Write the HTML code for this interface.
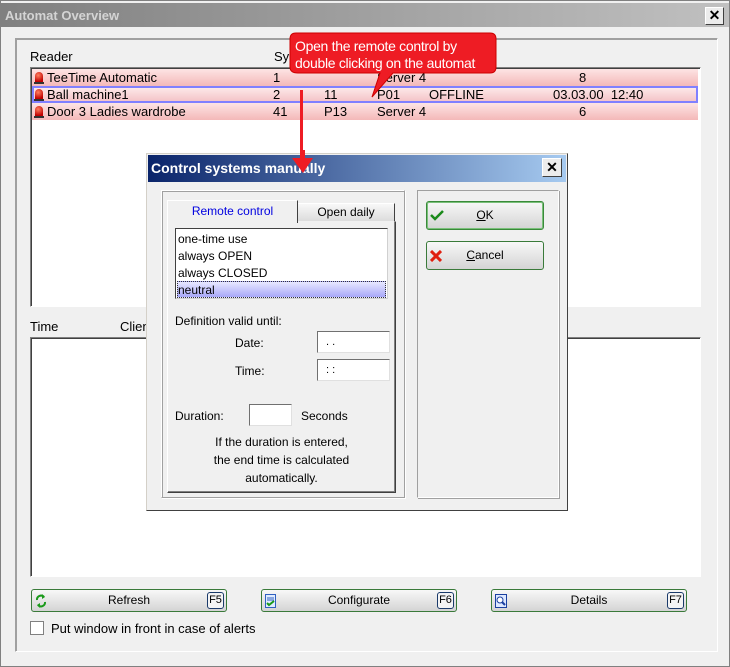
<!DOCTYPE html>
<html><head><meta charset="utf-8"><style>
*{box-sizing:border-box;margin:0;padding:0}
body{width:730px;height:667px;overflow:hidden;background:#fff;font-family:"Liberation Sans",Arial,sans-serif;font-size:12px;color:#000;position:relative}
.a{position:absolute}
.t{position:absolute;white-space:nowrap}
.sunk{border:1px solid;border-color:#808080 #fff #fff #808080;box-shadow:inset 1px 1px 0 #404040}
.btn{position:absolute;height:23px;border:1px solid #3a7a3a;border-radius:3px;background:linear-gradient(#f8f8f8,#e6e6e6 50%,#d4d4d4);text-align:center;line-height:21px;font-size:12px}
.fk{position:absolute;right:2px;top:2px;width:17px;height:17px;border:1px solid #1a3a6a;border-radius:3px;font-size:11px;line-height:15px;text-align:center;background:#f4f4f4}
.row{position:absolute;left:32px;width:666px;height:17px;background:linear-gradient(#fde4e4,#f4b8b8);}
.bell{position:absolute;left:3px;top:3px;width:8px;height:11px;background:radial-gradient(circle at 40% 30%,#ff8060,#c00000 70%);border-radius:4px 4px 1px 1px}
.bell:after{content:"";position:absolute;left:-1px;bottom:-1px;width:10px;height:2px;background:#333}
.inp{position:absolute;background:#fff;border:1px solid;border-color:#707070 #e0e0e0 #e0e0e0 #707070;height:22px;font-size:11px;padding-left:8px;line-height:20px}
</style></head><body>
<div class="a" style="left:0;top:0;width:730px;height:667px;background:#f0f0f0;border:1px solid #808080"></div>
<div class="a" style="left:1px;top:3px;width:728px;height:24px;background:linear-gradient(90deg,#808080,#c0c0c0)"></div>
<div class="t" style="left:5px;top:8px;font-weight:bold;font-size:13px;color:#d4d4d4">Automat Overview</div>
<div class="a" style="left:705px;top:7px;width:19px;height:18px;background:#ececec;border:1px solid;border-color:#fff #404040 #404040 #fff;text-align:center;font-weight:bold;font-size:14px;line-height:15px">✕</div>
<div class="a" style="left:15px;top:38px;width:703px;height:614px;border:1px solid;border-color:#a0a0a0 #fff #fff #a0a0a0;box-shadow:1px 1px 0 #a0a0a0 inset"></div>
<div class="t" style="left:30px;top:49px;font-size:13px">Reader</div>
<div class="t" style="left:274px;top:49px;font-size:13px">Sys</div>
<div class="a sunk" style="left:30px;top:67px;width:671px;height:240px;background:#fff"></div>
<div class="row" style="top:69px"><div class="bell"></div><span class="t" style="left:15px;top:1px;font-size:13px">TeeTime Automatic</span><span class="t" style="left:241px;top:1px;font-size:13px">1</span><span class="t" style="left:345px;top:1px;font-size:13px">Server 4</span><span class="t" style="left:547px;top:1px;font-size:13px">8</span></div>
<div class="row" style="top:86px;border:2px solid #8080ff;background:linear-gradient(#fde8e8,#f4c4c8)"><div class="bell" style="top:1px;left:1px"></div><span class="t" style="left:13px;top:-1px;font-size:13px">Ball machine1</span><span class="t" style="left:239px;top:-1px;font-size:13px">2</span><span class="t" style="left:290px;top:-1px;font-size:13px">11</span><span class="t" style="left:343px;top:-1px;font-size:13px">P01</span><span class="t" style="left:395px;top:-1px;font-size:13px">OFFLINE</span><span class="t" style="left:519px;top:-1px;font-size:13px">03.03.00 &nbsp;12:40</span></div>
<div class="row" style="top:103px"><div class="bell"></div><span class="t" style="left:15px;top:1px;font-size:13px">Door 3 Ladies wardrobe</span><span class="t" style="left:241px;top:1px;font-size:13px">41</span><span class="t" style="left:292px;top:1px;font-size:13px">P13</span><span class="t" style="left:345px;top:1px;font-size:13px">Server 4</span><span class="t" style="left:547px;top:1px;font-size:13px">6</span></div>
<div class="t" style="left:30px;top:319px;font-size:13px">Time</div>
<div class="t" style="left:120px;top:319px;font-size:13px">Clien</div>
<div class="a sunk" style="left:30px;top:337px;width:671px;height:240px;background:#fff"></div>
<div class="btn" style="left:31px;top:589px;width:196px">Refresh<div class="fk">F5</div>
<svg class="a" style="left:3px;top:3px" width="12" height="16"><path d="M2 7a4 4 0 0 1 7-3" fill="none" stroke="#1a9a1a" stroke-width="2"/><path d="M7 1l3 3-3 2z" fill="#1a9a1a"/><path d="M10 9a4 4 0 0 1-7 3" fill="none" stroke="#1a9a1a" stroke-width="2"/><path d="M5 15l-3-3 3-2z" fill="#1a9a1a"/></svg></div>
<div class="btn" style="left:261px;top:589px;width:196px">Configurate<div class="fk">F6</div>
<svg class="a" style="left:3px;top:4px" width="12" height="14"><rect x="0.5" y="0.5" width="10" height="13" fill="#e0ecff" stroke="#3060c0"/><path d="M2 4h7M2 6h7" stroke="#3060c0"/><path d="M2 9l2 2 5-4" fill="none" stroke="#1a9a1a" stroke-width="2"/></svg></div>
<div class="btn" style="left:491px;top:589px;width:196px">Details<div class="fk">F7</div>
<svg class="a" style="left:3px;top:4px" width="12" height="14"><rect x="0.5" y="0.5" width="11" height="13" fill="#dde8ff" stroke="#1a40a0"/><circle cx="5" cy="6" r="3" fill="#fff" stroke="#1a40a0"/><path d="M7 8l3 3" stroke="#1a40a0" stroke-width="2"/></svg></div>
<div class="a" style="left:30px;top:621px;width:14px;height:14px;background:#fff;border:1px solid #808080"></div>
<div class="t" style="left:51px;top:621px;font-size:13px">Put window in front in case of alerts</div>

<svg class="a" style="left:0;top:0" width="730" height="170">
<path d="M298 33h192q6 0 6 6v28q0 6-6 6h-97l-21 24 8-24h-82q-8 0-8-6v-28q0-6 6-6z" fill="#ee1c24" stroke="#c00" stroke-width="1"/>
<rect x="300" y="90" width="3" height="70" fill="#ee1c24"/>
</svg>
<div class="t" style="left:295px;top:38px;font-size:14px;color:#fff;line-height:17px;letter-spacing:-0.3px">Open the remote control by<br>double clicking on the automat</div>

<div class="a" style="left:146px;top:153px;width:422px;height:358px;background:#f0f0f0;border:1px solid;border-color:#d4d0c8 #404040 #404040 #d4d0c8"></div>
<div class="a" style="left:148px;top:155px;width:418px;height:27px;background:linear-gradient(90deg,#0a246a,#a6caf0)"></div>
<div class="t" style="left:151px;top:160px;font-weight:bold;font-size:14px;color:#fff">Control systems manually</div>
<svg class="a" style="left:291px;top:150px" width="22" height="30"><path d="M9 0h5v10h-5zM1 8h21l-10 15z" fill="#ee1c24"/></svg>
<div class="a" style="left:542px;top:158px;width:20px;height:19px;background:#ececec;border:1px solid;border-color:#fff #404040 #404040 #fff;text-align:center;font-weight:bold;font-size:14px;line-height:16px">✕</div>
<div class="a" style="left:161px;top:190px;width:244px;height:308px;border:1px solid;border-color:#fff #a0a0a0 #a0a0a0 #fff;box-shadow:inset 1px 1px 0 #a0a0a0,1px 1px 0 #fff"></div>
<div class="a" style="left:417px;top:190px;width:142px;height:308px;border:1px solid;border-color:#a0a0a0 #fff #fff #a0a0a0;box-shadow:1px 1px 0 #a0a0a0"></div>
<div class="a" style="left:167px;top:221px;width:229px;height:272px;border:1px solid;border-color:#fff #404040 #404040 #fff;box-shadow:inset -1px -1px 0 #808080"></div>
<div class="a" style="left:297px;top:203px;width:98px;height:19px;background:linear-gradient(#f8f8f8,#dcdcdc);border:1px solid;border-color:#fff #404040 #f0f0f0 #fff;text-align:center;line-height:17px;font-size:12px">Open daily</div>
<div class="a" style="left:167px;top:200px;width:131px;height:23px;background:#f0f0f0;border:1px solid;border-color:#fff #404040 transparent #fff;border-bottom:none;text-align:center;line-height:20px;font-size:12px;color:#0000e0">Remote control</div>
<div class="a" style="left:175px;top:228px;width:213px;height:71px;background:#fff;border:1px solid;border-color:#404040 #d0d0d0 #d0d0d0 #404040"></div>
<div class="t" style="left:178px;top:231px;font-size:12px;line-height:17px">one-time use<br>always OPEN<br>always CLOSED</div>
<div class="a" style="left:177px;top:281px;width:209px;height:17px;background:linear-gradient(#e8e8ff,#a8a8f8);border:1px dotted #333"></div>
<div class="t" style="left:178px;top:283px;font-size:12px">neutral</div>
<div class="t" style="left:175px;top:314px;font-size:12px">Definition valid until:</div>
<div class="t" style="left:235px;top:336px;font-size:12px">Date:</div>
<div class="t" style="left:235px;top:364px;font-size:12px">Time:</div>
<div class="inp" style="left:317px;top:331px;width:73px">. .</div>
<div class="inp" style="left:317px;top:359px;width:73px">: :</div>
<div class="t" style="left:175px;top:409px;font-size:12px">Duration:</div>
<div class="inp" style="left:249px;top:404px;width:43px"></div>
<div class="t" style="left:301px;top:409px;font-size:12px">Seconds</div>
<div class="t" style="left:167px;top:433px;width:229px;text-align:center;font-size:12px;line-height:18px">If the duration is entered,<br>the end time is calculated<br>automatically.</div>
<div class="btn" style="left:426px;top:201px;width:118px;height:29px;line-height:27px;border-color:#3a8a3a;box-shadow:inset 0 0 0 1px #7ac07a"><u>O</u>K
<svg class="a" style="left:3px;top:7px" width="14" height="12"><path d="M1 6l4 4 8-8" fill="none" stroke="#1a8a1a" stroke-width="2.5"/></svg></div>
<div class="btn" style="left:426px;top:241px;width:118px;height:29px;line-height:27px"><u>C</u>ancel
<svg class="a" style="left:3px;top:8px" width="12" height="12"><path d="M1 1l10 10M11 1L1 11" stroke="#e02010" stroke-width="3"/></svg></div>
</body></html>
